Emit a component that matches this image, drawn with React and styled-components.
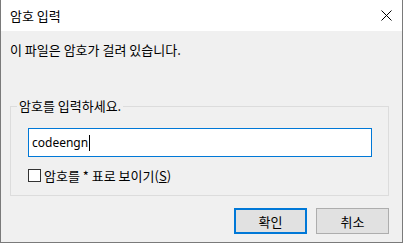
import styled, { createGlobalStyle } from "styled-components";

const GlobalStyle = createGlobalStyle`
  html, body {
    margin: 0;
    padding: 0;
    background: #f0f0f0;
  }
  body {
    font-family: "Noto Sans CJK KR", "Noto Sans", sans-serif;
    font-size: 13px;
    color: #000;
  }
`;

const Window = styled.div`
  width: 403px;
  height: 243px;
  box-sizing: border-box;
  border: 1px solid #7a7a7a;
  border-top: none;
  background: #f0f0f0;
  display: flex;
  flex-direction: column;
`;

const TitleBar = styled.div`
  height: 31px;
  flex: none;
  background: #fff;
  display: flex;
  align-items: center;
  justify-content: space-between;
  padding: 0 9px 0 9px;
`;

const Title = styled.div`
  font-size: 13px;
  line-height: 15px;
`;

const CloseButton = styled.div`
  width: 11px;
  height: 11px;
  display: flex;
  margin-right: 1px;
`;

const Body = styled.div`
  flex: 1;
  display: flex;
  flex-direction: column;
  padding: 11px 13px 0 9px;
`;

const Message = styled.div`
  line-height: 16px;
  height: 16px;
`;

const GroupBox = styled.fieldset`
  margin: 41px 0 0 0;
  padding: 0;
  border: 1px solid #dcdcdc;
  min-width: 0;
`;

const Legend = styled.legend`
  margin-left: 6px;
  padding: 0 2px;
  line-height: 14px;
  font-size: 13px;
`;

const GroupInner = styled.div`
  padding: 15px 16px 13px 17px;
  display: flex;
  flex-direction: column;
  gap: 11px;
`;

const PasswordField = styled.div`
  height: 29px;
  box-sizing: border-box;
  border: 1px solid #0078d7;
  background: #fff;
  display: flex;
  align-items: center;
  padding-left: 3px;
  font-family: "Segoe UI", "Noto Sans", "Noto Sans CJK KR", sans-serif;
  font-size: 12px;
`;

const Caret = styled.span`
  display: inline-block;
  width: 1px;
  height: 16px;
  background: #000;
  margin-left: 1px;
`;

const CheckRow = styled.label`
  display: flex;
  align-items: center;
  gap: 3px;
  height: 14px;
`;

const CheckBox = styled.span`
  width: 13px;
  height: 13px;
  box-sizing: border-box;
  border: 1px solid #333;
  background: #fff;
`;

const ButtonRow = styled.div`
  display: flex;
  justify-content: flex-end;
  gap: 9px;
  margin-top: 12px;
`;

const Button = styled.button`
  width: 73px;
  height: 26px;
  box-sizing: border-box;
  background: #e1e1e1;
  border: ${(p) => (p.$default ? "2px solid #0078d7" : "1px solid #adadad")};
  font-family: "Noto Sans CJK KR", sans-serif;
  font-size: 13px;
  color: #000;
  padding: 0;
`;

function App() {
  return (
    <>
      <GlobalStyle />
      <Window>
        <TitleBar>
          <Title>암호 입력</Title>
          <CloseButton>
            <svg width="11" height="11" viewBox="0 0 11 11">
              <path d="M0.5 0.5 L10.5 10.5 M10.5 0.5 L0.5 10.5" stroke="#000" strokeWidth="1" fill="none" />
            </svg>
          </CloseButton>
        </TitleBar>
        <Body>
          <Message>이 파일은 암호가 걸려 있습니다.</Message>
          <GroupBox>
            <Legend>암호를 입력하세요.</Legend>
            <GroupInner>
              <PasswordField>
                codeengn
                <Caret />
              </PasswordField>
              <CheckRow>
                <CheckBox />
                <span>
                  암호를 * 표로 보이기(<u>S</u>)
                </span>
              </CheckRow>
            </GroupInner>
          </GroupBox>
          <ButtonRow>
            <Button $default>확인</Button>
            <Button>취소</Button>
          </ButtonRow>
        </Body>
      </Window>
    </>
  );
}

export default App;
